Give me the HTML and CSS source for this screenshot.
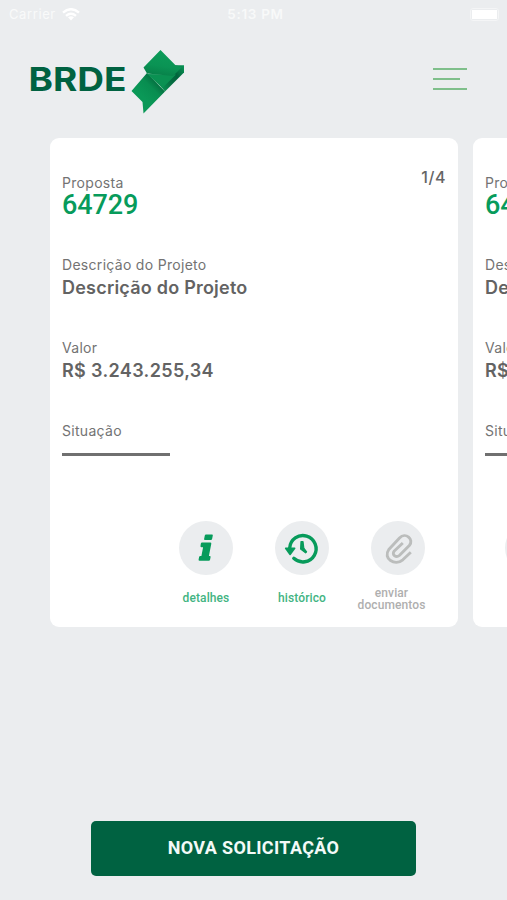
FILE: index.html
```html
<!DOCTYPE html>
<html lang="pt-BR">
<head>
<meta charset="utf-8">
<meta name="viewport" content="width=device-width">
<title>BRDE</title>
<link rel="stylesheet" href="styles.css">
</head>
<body>
<svg width="0" height="0" class="defs">
  <defs>
    <symbol id="info" viewBox="0 0 54 54">
      <path d="M27 13.500h6q1 0 .8 1l-.7 3.600q-.2 1-1.200 1h-6q-1 0-.8-1l.7-3.600q.2-1 1.200-1zM22.500 21.500h8.700q1.300 0 1.100 1.300l-2.400 12.200h.8q1.100 0 .9 1.100l-.5 2.400q-.2 1.200-1.300 1.200H20.600q-1.200 0-1-1.200l.5-2.400q.2-1.100 1.300-1.100h1l1.700-8.800h-1.600q-1.200 0-1-1.200l.3-2.300q.2-1.200 1.300-1.200z" fill="#079b5b"/>
    </symbol>
    <symbol id="history" viewBox="0 0 54 54">
      <path d="M14.700 29V27A13.200 13.200 0 1 1 18.800 37.300" fill="none" stroke="#079b5b" stroke-width="3.400" stroke-linecap="round"/>
      <path d="M10.500 26.500h9.400q.9.300.4 1.200l-4.600 6.300q-.6.700-1.200 0L10 27.700q-.5-.9.500-1.200z" fill="#079b5b"/>
      <path d="M26 20.500h2l.8 6.600 2.800 3.800-1 1-5-3.900z" fill="#079b5b" stroke="#079b5b" stroke-width="1.200" stroke-linejoin="round"/>
    </symbol>
    <symbol id="clip" viewBox="0 0 54 54">
      <path d="M39.800 31.300 31.800 38.800C24 45.500 11.500 37.500 17.800 28.500L28.500 17C34.500 10.500 43.500 18.500 38.300 24.500L28.300 34.500C25 37.200 20.300 33.500 23.300 30L31.800 22" fill="none" stroke="#bbbdbc" stroke-width="2.900" stroke-linejoin="round"/>
    </symbol>
  </defs>
</svg>
<div class="screen">
  <div class="status">
    <div class="carrier"><span>Carrier</span>
      <svg width="18" height="13" viewBox="0 0 18 13"><g fill="none" stroke="#fff" stroke-width="2.400"><path d="M1 4.600Q9-2.200 17 4.600M4 7.800Q9 3.600 14 7.800"/></g><path d="M6 9.300Q9 7 12 9.300L9 12.500z" fill="#fff"/></svg>
    </div>
    <span class="time">5:13 PM</span>
    <div class="battery"><i></i></div>
  </div>
  <header class="header">
    <svg class="logo" width="156" height="66" viewBox="0 0 156 66">
      <defs>
        <linearGradient id="top" gradientUnits="userSpaceOnUse" x1="130" y1="0" x2="126" y2="26"><stop offset="0" stop-color="#0c9c59"/><stop offset=".6" stop-color="#0a9354"/><stop offset="1" stop-color="#077f48"/></linearGradient>
        <linearGradient id="tail" gradientUnits="userSpaceOnUse" x1="127" y1="31" x2="112" y2="46"><stop offset="0" stop-color="#046c3f"/><stop offset=".4" stop-color="#088d50"/><stop offset="1" stop-color="#0a9857"/></linearGradient>
        <linearGradient id="side" gradientUnits="userSpaceOnUse" x1="127" y1="34" x2="154" y2="16"><stop offset="0" stop-color="#099452"/><stop offset=".4" stop-color="#056d41"/><stop offset=".65" stop-color="#00633b"/><stop offset="1" stop-color="#0a9455"/></linearGradient>
      </defs>
      <text class="wordmark" x="-1.500" y="41" textLength="98" lengthAdjust="spacingAndGlyphs">BRDE</text>
      <path d="M117 23 135 41.500 113.500 63.500 112.500 52 101.500 41z" fill="url(#tail)"/>
      <path d="M144 15.300H154V22.500L135 41.500 126 31z" fill="url(#side)"/>
      <path d="M117 24 146 24.500 132.500 38z" fill="#0a9152"/>
      <path d="M130.500 0 145.500 15.300 152 17 143 26 117 23.500 113.500 17.500z" fill="url(#top)"/>
    </svg>
    <div class="menu"><i></i><i></i><i></i></div>
  </header>
  <main class="cards">
    <article class="card">
      <span class="page">1/4</span>
      <div class="field first"><div class="label">Proposta</div><div class="number">64729</div></div>
      <div class="field"><div class="label">Descrição do Projeto</div><div class="value">Descrição do Projeto</div></div>
      <div class="field"><div class="label">Valor</div><div class="value money">R$ 3.243.255,34</div></div>
      <div class="field"><div class="label">Situação</div><div class="line"></div></div>
      <div class="actions">
        <div class="action"><svg class="circle"><use href="#info"/></svg><span>detalhes</span></div>
        <div class="action"><svg class="circle"><use href="#history"/></svg><span>histórico</span></div>
        <div class="action off"><svg class="circle"><use href="#clip"/></svg><span>enviar<br>documentos</span></div>
      </div>
    </article>
    <article class="card">
      <div class="field first"><div class="label">Proposta</div><div class="number">64729</div></div>
      <div class="field"><div class="label">Descrição do Projeto</div><div class="value">Descrição do Projeto</div></div>
      <div class="field"><div class="label">Valor</div><div class="value money">R$ 3.243.255,34</div></div>
      <div class="field"><div class="label">Situação</div><div class="line"></div></div>
      <div class="actions early">
        <div class="action"><svg class="circle"><use href="#info"/></svg></div>
      </div>
    </article>
  </main>
  <button class="cta">NOVA SOLICITAÇÃO</button>
</div>
</body>
</html>
```
FILE: styles.css
```css
* { box-sizing: border-box; }
body { margin: 0; background: #ebedef; font-family: Inter, "Liberation Sans", sans-serif; }
.defs { display: block; }
.screen { width: 507px; height: 900px; overflow: hidden; display: flex; flex-direction: column; }
.status { flex: none; height: 28px; padding: 0 8px 0 9px; display: grid; grid-template-columns: 1fr auto 1fr; align-items: center; color: #fff; font-size: 13px; }
.carrier { display: flex; align-items: center; gap: 6px; color: #f9fafa; letter-spacing: .6px; }
.time { font-size: 13.500px; font-weight: 600; color: #f8f9f9; letter-spacing: .7px; padding-left: 3px; }
.battery { justify-self: end; width: 29px; height: 13px; border: 1px solid #f4f5f6; border-radius: 3px; padding: 1px; }
.battery i { display: block; width: 25px; height: 9px; background: #fff; }
.header { flex: none; height: 110px; padding: 22px 40px 0 30px; display: flex; justify-content: space-between; align-items: flex-start; }
.logo { overflow: visible; }
.wordmark { font: 700 33px Inter, sans-serif; fill: #006241; }
.menu { display: flex; flex-direction: column; gap: 8px; padding-top: 17.500px; width: 34px; }
.menu i { height: 2px; background: #7fbf8b; }
.menu i:nth-child(2) { width: 27px; }
.cards { flex: none; display: flex; gap: 15px; padding-left: 50px; }
.card { position: relative; flex: none; width: 408px; height: 489px; background: #fff; border-radius: 9px; padding: 35px 12px 0; display: flex; flex-direction: column; }
.page { position: absolute; top: 29px; right: 12px; font-size: 16px; line-height: 20px; font-weight: 500; letter-spacing: .6px; color: #666; }
.field { height: 83px; color: #666; }
.field.first { height: 82px; }
.label { font-size: 14px; line-height: 20px; letter-spacing: .3px; color: #737373; }
.number { font: 500 27px/24px Roboto, sans-serif; letter-spacing: -.1px; color: #079b5b; }
.value { font-size: 18px; line-height: 26px; font-weight: 600; letter-spacing: .22px; color: #636363; }
.money { letter-spacing: .35px; }
.line { width: 108px; height: 3px; background: #707070; margin-top: 12px; }
.actions { margin-top: 17px; display: flex; gap: 42px; padding-left: 117px; }
.actions.early { padding-left: 20px; }
.action { width: 54px; display: flex; flex-direction: column; align-items: center; font: 500 12px/12px Roboto, sans-serif; color: #42b482; text-align: center; white-space: nowrap; letter-spacing: .1px; }
.circle { width: 54px; height: 54px; flex: none; background: #ebedef; border-radius: 50%; }
.action span { margin-top: 17px; }
.off { color: #afafaf; }
.off span { margin: 12px 13px 0 0; }
.cta { flex: none; width: 325px; height: 55px; margin: 194px 0 0 91px; padding: 0 0 3px; border: 0; border-radius: 5px; background: #006241; color: #f3faf7; font: 700 18px Roboto, sans-serif; letter-spacing: .35px; }
```
